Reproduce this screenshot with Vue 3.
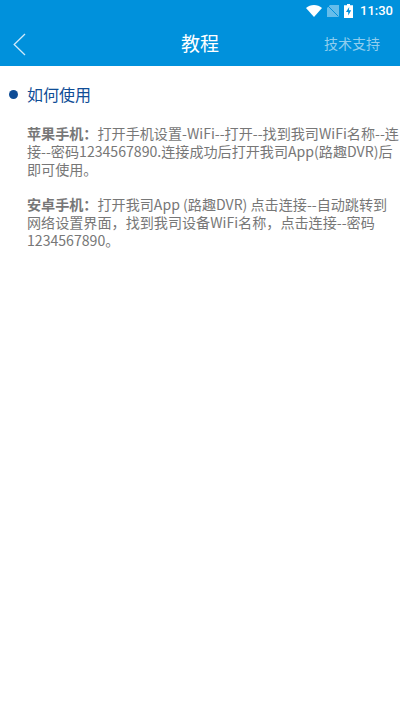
<template>
  <div class="page">
    <header class="top">
      <div class="status">
        <svg class="wifi" width="16" height="12" viewBox="0 0 16 12"><path d="M0 3C2.200 1.100 5 0 8 0s5.800 1.100 8 3L8 12z" fill="#fff"/></svg>
        <svg class="sim" width="12" height="12" viewBox="0 0 12 12"><path d="M3 0h9v12H0V3z" fill="#fff" opacity=".4"/><path d="M0.500 0.500l11 11" stroke="#0091dc" stroke-width="1"/></svg>
        <svg class="bat" width="9" height="14" viewBox="0 0 9 14"><path fill-rule="evenodd" d="M3 0h3v1.200h3V14H0V1.200h3zM5.200 3L2 8h2.200v3.500l3-5.300H5z" fill="#fff"/></svg>
        <span class="time">11:30</span>
      </div>
      <nav class="nav">
        <svg class="back" width="13" height="23" viewBox="0 0 13 23"><path d="M12 1L1.200 11.500 12 22" fill="none" stroke="#cfeafa" stroke-width="1.300"/></svg>
        <h1 class="title">教程</h1>
        <span class="support">技术支持</span>
      </nav>
    </header>
    <main class="content">
      <div class="heading"><i class="dot"></i><span>如何使用</span></div>
      <p class="para"><b>苹果手机：</b>打开手机设置-WiFi--打开--找到我司WiFi名称--连接--密码1234567890.连接成功后打开我司App(路趣DVR)后即可使用。</p>
      <p class="para"><b>安卓手机：</b>打开我司App (路趣DVR) 点击连接--自动跳转到网络设置界面，找到我司设备WiFi名称，点击连接--密码1234567890。</p>
    </main>
  </div>
</template>

<script setup>
</script>

<style>
html, body { margin: 0; background: #fff; }
</style>

<style scoped>
.page {
  width: 400px;
  height: 712px;
  background: #fff;
  font-family: "Noto Sans CJK SC", Roboto, sans-serif;
  overflow: hidden;
}
.top {
  height: 66px;
  background: #0091dc;
  color: #fff;
}
.status {
  height: 21px;
  display: flex;
  align-items: center;
  justify-content: flex-end;
  padding-right: 7px;
}
.wifi { margin-right: 5px; }
.sim { margin-right: 5px; }
.bat { margin-right: 7px; }
.time { font-family: Roboto, sans-serif; font-size: 13px; font-weight: 500; }
.nav {
  height: 43px;
  display: flex;
  align-items: center;
  justify-content: space-between;
  padding: 0 20px 0 13px;
  position: relative;
}
.back { margin-top: 3px; }
.title {
  position: absolute;
  left: 0;
  right: 0;
  margin: 0;
  text-align: center;
  font-size: 19px;
  font-weight: 400;
}
.support { font-size: 14px; color: #8fcdee; }
.content { padding: 17px 0 0 27px; }
.heading {
  position: relative;
  font-size: 16px;
  line-height: 22px;
  color: #0f4d96;
}
.dot {
  position: absolute;
  left: -18px;
  top: 7px;
  width: 9px;
  height: 9px;
  border-radius: 50%;
  background: #0f4d96;
}
.para {
  margin: 19px 0 0;
  font-size: 14.1px;
  line-height: 18px;
  color: #777;
}
.para + .para { margin-top: 17px; }
.para b { font-weight: 700; }
</style>
